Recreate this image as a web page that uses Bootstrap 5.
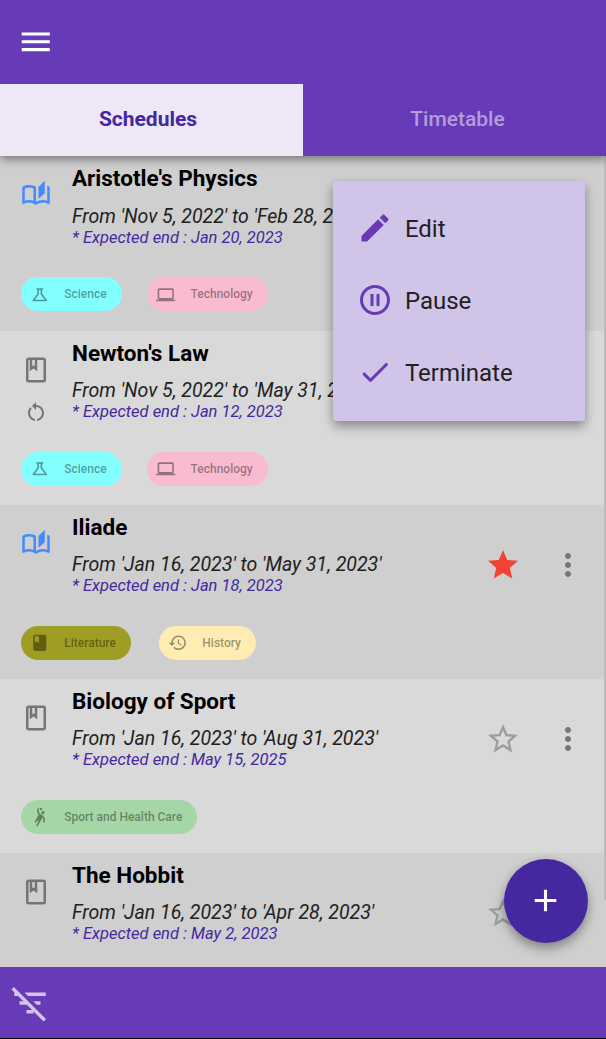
<!DOCTYPE html>
<html lang="en">
<head>
<meta charset="utf-8">
<meta name="viewport" content="width=device-width, initial-scale=1">
<title>Schedules</title>
<link href="https://cdn.jsdelivr.net/npm/bootstrap@5.3.0/dist/css/bootstrap.min.css" rel="stylesheet">
<style>
  body { font-family: Roboto, sans-serif; background: #000; height: 1039px; overflow: hidden; line-height: 1; }
  svg { fill: currentColor; display: block; flex: none; }
  .app { height: 1038px; }
  .topbar { height: 84px; background: #673ab7; color: #fff; padding-left: 17.3px; z-index: 4; }
  .tabs { height: 72px; background: #673ab7; z-index: 3; box-shadow: 0 3px 9px rgba(0,0,0,.45); }
  .tabs .nav-link { font-size: 21px; font-weight: 500; color: #b39ddb; border-radius: 0; padding: 0 0 1px 6px; }
  .tabs .nav-link.active { background: #ede7f6; color: #4527a0; font-weight: 700; padding: 0 7px 1px 0; }
  .schedules { height: 811px; padding-top: .4px; }
  .entry { height: 174.2px; flex: none; background: #d9d9d9; color: #212121; }
  .entry:nth-child(odd) { background: #cfcfcf; }
  .entry-main { height: 121px; }
  .kind { width: 72px; padding-top: 24px; color: #757575; gap: 7px; }
  .kind.reading { color: #448aff; }
  .title { font-size: 22.5px; font-weight: 700; line-height: 26px; margin: 9.1px 0 0; color: #000; }
  .period { font-size: 19.55px; font-style: italic; line-height: 24px; margin-top: 13.2px; white-space: nowrap; }
  .expected { font-size: 16.5px; font-style: italic; line-height: 18px; color: #4527a0; }
  .actions { color: #757575; padding-top: 42px; gap: 29.5px; margin-right: 20px; }
  .star { color: #9e9e9e; }
  .star.on { color: #f44336; }
  .tags { padding-left: 21px; gap: 25.7px; }
  .tag { height: 34px; border-radius: 17px; padding: 0 15.1px 0 9px; gap: 14.7px; font-size: 12px; font-weight: 500; color: rgba(0,0,0,.4); }
  .science { background: #84ffff; }
  .tech { background: #f8bbd0; }
  .lit { background: #9e9d24; margin-right: 2.5px; }
  .hist { background: #ffecb3; }
  .sport { background: #a5d6a7; }
  .scrollbar { right: 0; top: 0; width: 2px; height: 744px; background: #bcbcbc; }
  .popup { left: 333px; top: 24.5px; width: 252px; height: 240.5px; padding: 12px 23.5px; background: #d1c4e9; border: 0; border-radius: 3px; box-shadow: 0 6px 12px rgba(0,0,0,.3), 0 2px 8px rgba(0,0,0,.1); z-index: 2; display: block; }
  .popup .dropdown-item { height: 72px; padding: 0; gap: 12.4px; font-size: 24px; color: #212121; }
  .popup svg { color: #673ab7; margin-top: -1px; }
  .fab { width: 84px; height: 84px; right: 18.3px; bottom: 24.3px; background: #4527a0; color: #fff; z-index: 2; box-shadow: 0 6px 12px rgba(0,0,0,.3), 0 2px 8px rgba(0,0,0,.1); }
  .bottombar { height: 71px; background: #673ab7; color: #d1c4e9; padding-left: 9px; }
</style>
</head>
<body>
<svg width="0" height="0" class="position-absolute">
  <symbol id="menu" viewBox="0 0 24 24"><path d="M3 18h18v-2H3v2zm0-5h18v-2H3v2zm0-7v2h18V6H3z"/></symbol>
  <symbol id="stories" viewBox="0 0 24 24"><path d="M22.47 5.2C22 4.96 21.51 4.76 21 4.59v12.03C19.86 16.21 18.69 16 17.5 16c-1.9 0-3.78.54-5.5 1.58V5.48C10.38 4.55 8.51 4 6.5 4 4.71 4 3.02 4.44 1.53 5.2 1.2 5.36 1 5.71 1 6.08v12.08c0 .58.47.99 1 .99.16 0 .32-.04.48-.12C3.69 18.4 5.05 18 6.5 18c2.07 0 3.98.82 5.5 2 1.52-1.18 3.43-2 5.5-2 1.45 0 2.81.4 4.02 1.04.16.08.32.12.48.12.52 0 1-.41 1-.99V6.08C23 5.71 22.8 5.36 22.47 5.2zM10 16.62C8.86 16.21 7.69 16 6.5 16c-1.19 0-2.36.21-3.5.62V6.71C4.11 6.24 5.28 6 6.5 6 7.7 6 8.89 6.25 10 6.72v9.9zM19 .5l-5 5V15l5-4.5V.5z"/></symbol>
  <symbol id="book" viewBox="0 0 24 24"><path d="M18 2H6c-1.1 0-2 .9-2 2v16c0 1.1.9 2 2 2h12c1.1 0 2-.9 2-2V4c0-1.1-.9-2-2-2zM9 4h2v5l-1-.75L9 9V4zm9 16H6V4h1v9l3-2.25L13 13V4h5v16z"/></symbol>
  <symbol id="restart" viewBox="0 0 24 24"><path d="M12 5V2L8 6l4 4V7c3.31 0 6 2.69 6 6 0 2.97-2.17 5.43-5 5.91v2.02c3.95-.49 7-3.85 7-7.93 0-4.42-3.58-8-8-8zm-6 8c0-1.65.67-3.15 1.76-4.24L6.34 7.34C4.9 8.79 4 10.79 4 13c0 4.08 3.05 7.44 7 7.93v-2.02c-2.83-.48-5-2.94-5-5.91z"/></symbol>
  <symbol id="flask" viewBox="0 0 24 24"><path d="M13 11.33 18 18H6l5-6.67V6h2M15.96 4H8.04c-.42 0-.65.48-.39.81L9 6.5v4.17L3.2 18.4c-.49.66-.02 1.6.8 1.6h16c.82 0 1.29-.94.8-1.6L15 10.67V6.5l1.35-1.69c.26-.33.03-.81-.39-.81z"/></symbol>
  <symbol id="laptop" viewBox="0 0 24 24"><path d="M20 18c1.1 0 1.99-.9 1.99-2L22 6c0-1.1-.9-2-2-2H4c-1.1 0-2 .9-2 2v10c0 1.1.9 2 2 2H0v2h24v-2h-4zM4 6h16v10H4V6z"/></symbol>
  <symbol id="bookfill" viewBox="0 0 24 24"><path d="M18 2H6c-1.1 0-2 .9-2 2v16c0 1.1.9 2 2 2h12c1.1 0 2-.9 2-2V4c0-1.1-.9-2-2-2zM6 4h5v8l-2.5-1.5L6 12V4z"/></symbol>
  <symbol id="history" viewBox="0 0 24 24"><path d="M13 3c-4.97 0-9 4.03-9 9H1l3.89 3.89.07.14L9 12H6c0-3.87 3.13-7 7-7s7 3.13 7 7-3.13 7-7 7c-1.93 0-3.68-.79-4.94-2.06l-1.42 1.42C8.27 19.99 10.51 21 13 21c4.97 0 9-4.03 9-9s-4.03-9-9-9zm-1 5v5l4.28 2.54.72-1.21-3.5-2.08V8H12z"/></symbol>
  <symbol id="handball" viewBox="0 0 24 24"><path d="M14.27 6c-.55.95-.22 2.18.73 2.73.95.55 2.18.22 2.73-.73.55-.95.22-2.18-.73-2.73-.95-.55-2.18-.22-2.73.73z"/><path d="M15.84 10.41s-1.63-.94-2.6-1.5c-2.38-1.38-3.2-4.44-1.82-6.82l-1.73-1C8.1 3.83 8.6 7.21 10.66 9.4l-5.15 8.92 1.73 1 1.5-2.6 1.73 1-3 5.2 1.73 1 6.29-10.89c1.14 1.55 1.33 3.69.31 5.46l1.73 1c1.6-2.75 1.28-6.58-1.69-9.08zM12.75 3.8c.72.41 1.63.17 2.05-.55.41-.72.17-1.63-.55-2.05-.72-.41-1.63-.17-2.05.55-.41.72-.17 1.64.55 2.05z"/></symbol>
  <symbol id="star" viewBox="0 0 24 24"><path d="M12 17.27 18.18 21l-1.64-7.03L22 9.24l-7.19-.61L12 2 9.19 8.63 2 9.24l5.46 4.73L5.82 21z"/></symbol>
  <symbol id="starline" viewBox="0 0 24 24"><path d="m22 9.24-7.19-.62L12 2 9.19 8.63 2 9.24l5.46 4.73L5.82 21 12 17.27 18.18 21l-1.63-7.03L22 9.24zM12 15.4l-3.76 2.27 1-4.28-3.32-2.88 4.38-.38L12 6.1l1.71 4.04 4.38.38-3.32 2.88 1 4.28L12 15.4z"/></symbol>
  <symbol id="dots" viewBox="0 0 24 24"><path d="M12 8c1.1 0 2-.9 2-2s-.9-2-2-2-2 .9-2 2 .9 2 2 2zm0 2c-1.1 0-2 .9-2 2s.9 2 2 2 2-.9 2-2-.9-2-2-2zm0 6c-1.1 0-2 .9-2 2s.9 2 2 2 2-.9 2-2-.9-2-2-2z"/></symbol>
  <symbol id="edit" viewBox="0 0 24 24"><path d="M3 17.25V21h3.75L17.81 9.94l-3.75-3.75L3 17.25zM20.71 7.04c.39-.39.39-1.02 0-1.41l-2.34-2.34c-.39-.39-1.02-.39-1.41 0l-1.83 1.83 3.75 3.75 1.83-1.83z"/></symbol>
  <symbol id="pause" viewBox="0 0 24 24"><path d="M9 16h2V8H9v8zm3-14C6.48 2 2 6.48 2 12s4.48 10 10 10 10-4.48 10-10S17.52 2 12 2zm0 18c-4.41 0-8-3.59-8-8s3.59-8 8-8 8 3.59 8 8-3.59 8-8 8zm1-4h2V8h-2v8z"/></symbol>
  <symbol id="done" viewBox="0 0 24 24"><path d="m9 16.2-3.5-3.5c-.39-.39-1.01-.39-1.4 0-.39.39-.39 1.01 0 1.4l4.19 4.19c.39.39 1.02.39 1.41 0L20.3 7.7c.39-.39.39-1.01 0-1.4-.39-.39-1.01-.39-1.4 0L9 16.2z"/></symbol>
  <symbol id="plus" viewBox="0 0 24 24"><path d="M19 13h-6v6h-2v-6H5v-2h6V5h2v6h6v2z"/></symbol>
  <symbol id="filteroff" viewBox="0 0 24 24"><path d="M10.83 8H21V6H8.83l2 2zm5 5H18v-2h-4.17l2 2zM14 16.83V18h-4v-2h3.17l-3-3H6v-2h2.17l-3-3H3V6h.17L1.39 4.22l1.41-1.41 18.38 18.38-1.41 1.41L14 16.83z"/></symbol>
</svg>

<div class="app d-flex flex-column">
  <header class="topbar position-relative d-flex align-items-center"><svg width="37.5" height="37.5"><use href="#menu"/></svg></header>
  <nav class="tabs nav nav-fill position-relative">
    <a class="nav-link active w-50 d-flex align-items-center justify-content-center">Schedules</a>
    <a class="nav-link w-50 d-flex align-items-center justify-content-center">Timetable</a>
  </nav>

  <main class="position-relative">
    <div class="schedules d-flex flex-column overflow-hidden">
      <article class="entry">
        <div class="entry-main d-flex">
          <div class="kind reading d-flex flex-column align-items-center"><svg width="30" height="30"><use href="#stories"/></svg></div>
          <div class="flex-grow-1"><h2 class="title">Aristotle's Physics</h2><div class="period">From 'Nov 5, 2022' to 'Feb 28, 2023'</div><div class="expected">* Expected end : Jan 20, 2023</div></div>
        </div>
        <div class="tags d-flex">
          <span class="tag science d-flex align-items-center"><svg width="19.5" height="19.5"><use href="#flask"/></svg>Science</span>
          <span class="tag tech d-flex align-items-center"><svg width="19.5" height="19.5"><use href="#laptop"/></svg>Technology</span>
        </div>
      </article>
      <article class="entry">
        <div class="entry-main d-flex">
          <div class="kind d-flex flex-column align-items-center"><svg width="30" height="30"><use href="#book"/></svg><svg width="24" height="24" class="mt-2"><use href="#restart"/></svg></div>
          <div class="flex-grow-1"><h2 class="title">Newton's Law</h2><div class="period">From 'Nov 5, 2022' to 'May 31, 2023'</div><div class="expected">* Expected end : Jan 12, 2023</div></div>
        </div>
        <div class="tags d-flex">
          <span class="tag science d-flex align-items-center"><svg width="19.5" height="19.5"><use href="#flask"/></svg>Science</span>
          <span class="tag tech d-flex align-items-center"><svg width="19.5" height="19.5"><use href="#laptop"/></svg>Technology</span>
        </div>
      </article>
      <article class="entry">
        <div class="entry-main d-flex">
          <div class="kind reading d-flex flex-column align-items-center"><svg width="30" height="30"><use href="#stories"/></svg></div>
          <div class="flex-grow-1"><h2 class="title">Iliade</h2><div class="period">From 'Jan 16, 2023' to 'May 31, 2023'</div><div class="expected">* Expected end : Jan 18, 2023</div></div>
          <div class="actions d-flex"><svg class="star on" width="36" height="36"><use href="#star"/></svg><svg width="36" height="36"><use href="#dots"/></svg></div>
        </div>
        <div class="tags d-flex">
          <span class="tag lit d-flex align-items-center"><svg width="19.5" height="19.5"><use href="#bookfill"/></svg>Literature</span>
          <span class="tag hist d-flex align-items-center"><svg width="19.5" height="19.5"><use href="#history"/></svg>History</span>
        </div>
      </article>
      <article class="entry">
        <div class="entry-main d-flex">
          <div class="kind d-flex flex-column align-items-center"><svg width="30" height="30"><use href="#book"/></svg></div>
          <div class="flex-grow-1"><h2 class="title">Biology of Sport</h2><div class="period">From 'Jan 16, 2023' to 'Aug 31, 2023'</div><div class="expected">* Expected end : May 15, 2025</div></div>
          <div class="actions d-flex"><svg class="star" width="36" height="36"><use href="#starline"/></svg><svg width="36" height="36"><use href="#dots"/></svg></div>
        </div>
        <div class="tags d-flex">
          <span class="tag sport d-flex align-items-center"><svg width="19.5" height="19.5"><use href="#handball"/></svg>Sport and Health Care</span>
        </div>
      </article>
      <article class="entry">
        <div class="entry-main d-flex">
          <div class="kind d-flex flex-column align-items-center"><svg width="30" height="30"><use href="#book"/></svg></div>
          <div class="flex-grow-1"><h2 class="title">The Hobbit</h2><div class="period">From 'Jan 16, 2023' to 'Apr 28, 2023'</div><div class="expected">* Expected end : May 2, 2023</div></div>
          <div class="actions d-flex"><svg class="star" width="36" height="36"><use href="#starline"/></svg><svg width="36" height="36"></svg></div>
        </div>
      </article>
    </div>
    <div class="scrollbar position-absolute"></div>
    <div class="popup position-absolute">
      <a class="dropdown-item d-flex align-items-center"><svg width="36" height="36"><use href="#edit"/></svg>Edit</a>
      <a class="dropdown-item d-flex align-items-center"><svg width="36" height="36"><use href="#pause"/></svg>Pause</a>
      <a class="dropdown-item d-flex align-items-center"><svg width="36" height="36"><use href="#done"/></svg>Terminate</a>
    </div>
    <button class="fab btn rounded-circle border-0 p-0 position-absolute d-flex align-items-center justify-content-center" aria-label="Add"><svg width="37" height="37"><use href="#plus"/></svg></button>
  </main>
  <footer class="bottombar d-flex align-items-center"><svg width="42" height="42"><use href="#filteroff"/></svg></footer>
</div>
<script src="https://cdn.jsdelivr.net/npm/bootstrap@5.3.0/dist/js/bootstrap.bundle.min.js"></script>
</body>
</html>
